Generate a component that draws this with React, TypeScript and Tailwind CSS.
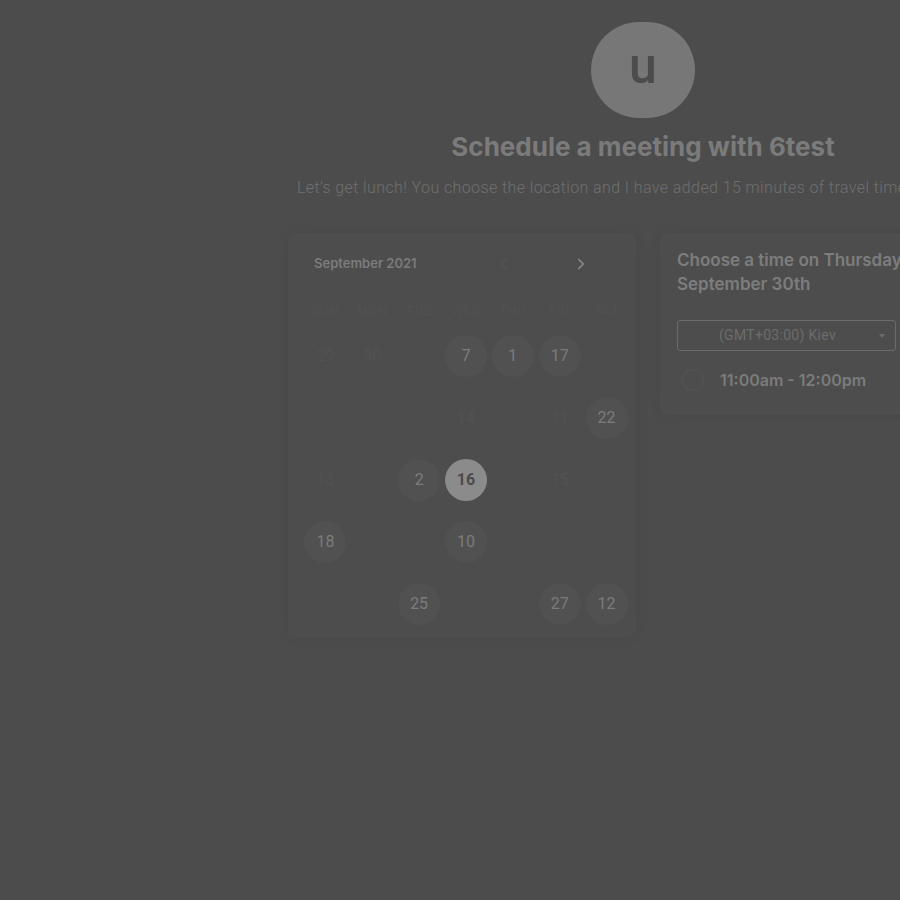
import { ChevronLeft, ChevronRight } from "lucide-react";

type Day = { n: string; kind: "off" | "open" | "picked" | "none" };

const weekdays = ["SUN", "MON", "TUE", "WED", "THU", "FRI", "SAT"];

const e: Day = { n: "", kind: "none" };
const off = (n: string): Day => ({ n, kind: "off" });
const open = (n: string): Day => ({ n, kind: "open" });

const weeks: Day[][] = [
  [off("29"), off("30"), e, open("7"), open("1"), open("17"), e],
  [e, e, e, off("14"), e, off("11"), open("22")],
  [off("13"), e, open("2"), { n: "16", kind: "picked" }, e, off("15"), e],
  [open("18"), e, e, open("10"), e, e, e],
  [e, e, open("25"), e, e, open("27"), open("12")],
];

function DayCell({ day }: { day: Day }) {
  const base =
    "size-[42px] rounded-full flex items-center justify-center text-[16px]";
  let look = "";
  if (day.kind === "open") look = "bg-[#515151] text-[#7c7c7c]";
  if (day.kind === "picked") look = "bg-[#8b8b8b] text-[#4c4c4c] font-bold";
  if (day.kind === "off") look = "text-[#525252]";
  return (
    <div className="h-[62px] flex items-center justify-center">
      <div className={`${base} ${look}`}>{day.n}</div>
    </div>
  );
}

function Calendar() {
  return (
    <div className="w-[348px] shrink-0 rounded-md bg-[#4d4d4d] shadow-[0_0_14px_rgba(0,0,0,0.05)] pl-[14px] pr-[6px] pt-[20px] pb-[2px]">
      <div className="h-[22px] flex items-center pl-[12px]">
        <span className="shrink-0 whitespace-nowrap font-['Inter'] text-[13px] font-semibold text-[#7b7b7b]">
          September 2021
        </span>
        <ChevronLeft className="shrink-0 ml-[78px] size-[18px] text-[#535353]" strokeWidth={2.2} />
        <ChevronRight className="shrink-0 ml-[59px] size-[18px] text-[#8a8a8a]" strokeWidth={2.2} />
      </div>
      <div className="mt-[26px] grid grid-cols-7 h-[16px] items-center">
        {weekdays.map((w) => (
          <span
            key={w}
            className="text-center text-[13px] tracking-wider text-[#515151]"
          >
            {w}
          </span>
        ))}
      </div>
      <div className="mt-[8px] grid grid-cols-7">
        {weeks.flat().map((d, i) => (
          <DayCell key={i} day={d} />
        ))}
      </div>
    </div>
  );
}

function TimePanel() {
  return (
    <div className="w-[338px] shrink-0 self-start rounded-md bg-[#4d4d4d] shadow-[0_0_14px_rgba(0,0,0,0.05)] pl-[17px] pt-[15px] pb-[20px] font-['Inter']">
      <h2 className="text-[17px] leading-[24px] font-semibold text-[#7d7d7d] whitespace-nowrap">
        Choose a time on Thursday,
        <br />
        September 30th
      </h2>
      <div className="mt-[24px] w-[219px] h-[31px] rounded-[3px] border border-[#6a6a6a] flex items-center pl-[41px] pr-[10px] font-['Roboto']">
        <span className="flex-1 text-[14px] tracking-[0.3px] text-[#6c6c6c]">(GMT+03:00) Kiev</span>
        <span className="w-0 h-0 border-l-[3px] border-r-[3px] border-t-[4px] border-l-transparent border-r-transparent border-t-[#6c6c6c]" />
      </div>
      <label className="mt-[14px] flex items-center h-[30px]">
        <span className="ml-[5px] size-[22px] rounded-full border border-[#555555]" />
        <span className="ml-[16px] text-[16px] font-semibold text-[#7b7b7b]">
          11:00am - 12:00pm
        </span>
      </label>
    </div>
  );
}

export default function App() {
  return (
    <div className="w-full h-[900px] overflow-hidden bg-[#4c4c4c] font-['Roboto']">
      <div className="w-[1286px] flex flex-col items-center pt-[22px]">
        <div className="w-[104px] h-[96px] rounded-full bg-[#777777] flex items-center justify-center">
          <span className="font-['Roboto'] text-[50px] leading-none font-medium text-[#4c4c4c] -mt-[8px]">
            u
          </span>
        </div>
        <h1 className="mt-[13px] font-['Inter'] text-[26px] leading-[32px] font-bold text-[#7b7b7b]">
          Schedule a meeting with 6test
        </h1>
        <div className="mt-[14px] w-[710px] pl-[9px]">
          <p className="text-[16px] leading-[22px] font-light tracking-[0.4px] text-[#6f6f6f] whitespace-nowrap">
            Let’s get lunch! You choose the location and I have added 15 minutes of travel time.
          </p>
        </div>
        <div className="mt-[34px] flex gap-[24px]">
          <Calendar />
          <TimePanel />
        </div>
      </div>
    </div>
  );
}
